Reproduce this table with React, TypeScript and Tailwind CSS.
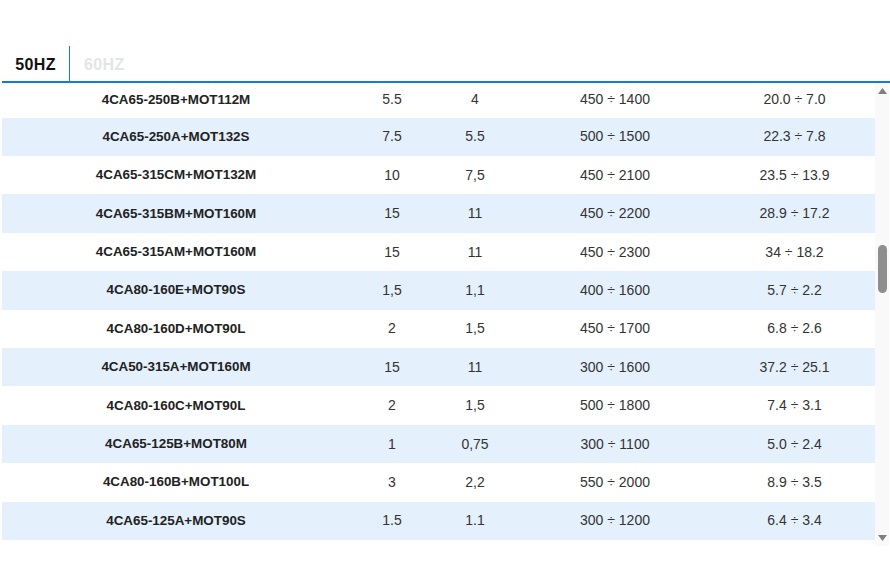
import React from "react";

const rows: [string, string, string, string, string][] = [
  ["4CA65-250B+MOT112M", "5.5", "4", "450 ÷ 1400", "20.0 ÷ 7.0"],
  ["4CA65-250A+MOT132S", "7.5", "5.5", "500 ÷ 1500", "22.3 ÷ 7.8"],
  ["4CA65-315CM+MOT132M", "10", "7,5", "450 ÷ 2100", "23.5 ÷ 13.9"],
  ["4CA65-315BM+MOT160M", "15", "11", "450 ÷ 2200", "28.9 ÷ 17.2"],
  ["4CA65-315AM+MOT160M", "15", "11", "450 ÷ 2300", "34 ÷ 18.2"],
  ["4CA80-160E+MOT90S", "1,5", "1,1", "400 ÷ 1600", "5.7 ÷ 2.2"],
  ["4CA80-160D+MOT90L", "2", "1,5", "450 ÷ 1700", "6.8 ÷ 2.6"],
  ["4CA50-315A+MOT160M", "15", "11", "300 ÷ 1600", "37.2 ÷ 25.1"],
  ["4CA80-160C+MOT90L", "2", "1,5", "500 ÷ 1800", "7.4 ÷ 3.1"],
  ["4CA65-125B+MOT80M", "1", "0,75", "300 ÷ 1100", "5.0 ÷ 2.4"],
  ["4CA80-160B+MOT100L", "3", "2,2", "550 ÷ 2000", "8.9 ÷ 3.5"],
  ["4CA65-125A+MOT90S", "1.5", "1.1", "300 ÷ 1200", "6.4 ÷ 3.4"],
];

export default function App() {
  return (
    <div
      className="w-[890px] h-[564px] bg-white overflow-hidden"
      style={{ fontFamily: '"Liberation Sans", Arial, sans-serif' }}
    >
      <div className="h-[46px]" />
      <div className="flex h-[35px] ml-[2px]">
        <div className="w-[68px] flex items-center justify-center pt-[3px] border-r border-[#1279e6] text-[16px] font-bold text-[#111] tracking-[0.4px]">
          50HZ
        </div>
        <div className="flex items-center pl-[14px] pt-[3px] text-[16px] font-bold text-[#e3e5e8] tracking-[0.4px]">
          60HZ
        </div>
      </div>
      <div className="ml-[2px] h-[2px] bg-[#1279e6]" />
      <div className="flex ml-[2px] h-[463px]">
        <div className="w-[873px] flex flex-col">
          {rows.map((r, i) => (
            <div
              key={i}
              className={`flex items-center ${i === 0 ? "h-[34.7px] pb-[1px]" : "h-[38.4px]"} ${i % 2 === 1 ? "bg-[#e5f0fd]" : "bg-white"}`}
            >
              <div className="w-[348px] text-center font-bold text-[13.4px] text-[#222]">{r[0]}</div>
              <div className="w-[84px] text-center text-[14px] text-[#333]">{r[1]}</div>
              <div className="w-[82px] text-center text-[14px] text-[#333]">{r[2]}</div>
              <div className="w-[198px] text-center text-[14px] text-[#333]">{r[3]}</div>
              <div className="w-[161px] text-center text-[14px] text-[#333]">{r[4]}</div>
            </div>
          ))}
        </div>
        <div className="w-[14px] bg-[#f9f9f9] flex flex-col items-center">
          <svg width="9" height="6" viewBox="0 0 9 6" className="mt-[5px]">
            <polygon points="4.5,0 9,6 0,6" fill="#7f7f7f" />
          </svg>
          <div className="mt-[151px] w-[9px] h-[48px] rounded-full bg-[#8e8e8e]" />
          <div className="flex-1" />
          <svg width="9" height="6" viewBox="0 0 9 6" className="mb-[5px]">
            <polygon points="0,0 9,0 4.5,6" fill="#7f7f7f" />
          </svg>
        </div>
      </div>
    </div>
  );
}
